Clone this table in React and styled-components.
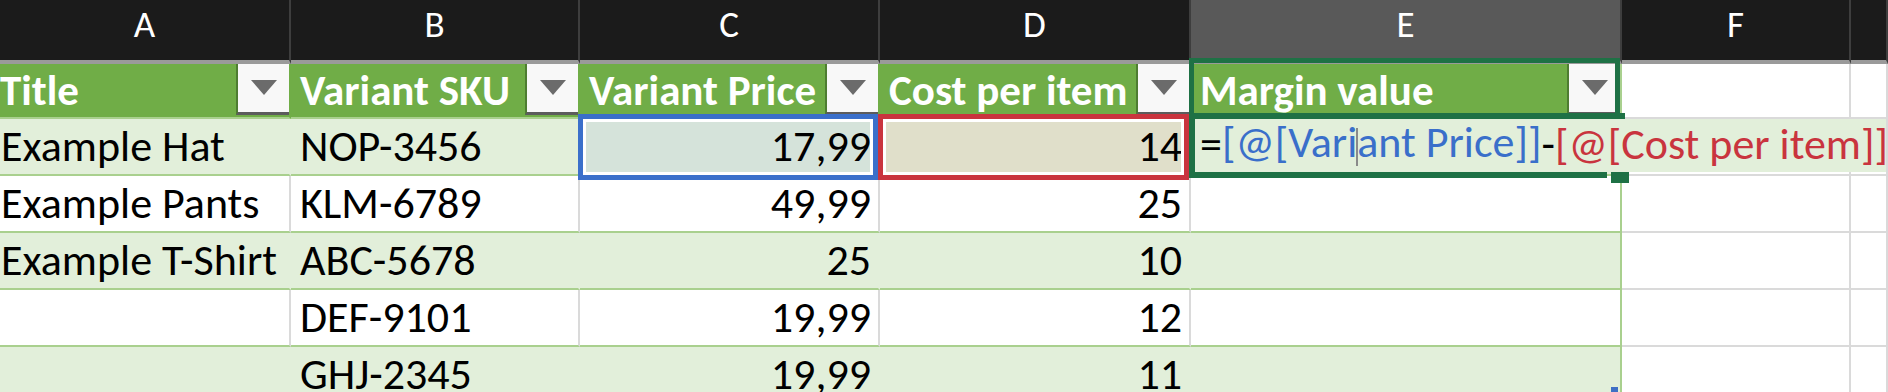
import React from 'react';
import styled, { createGlobalStyle } from 'styled-components';

const COLS = '291px 289px 300px 311px 431px 229px 1fr';

const GREEN = '#70ad47';
const BAND = '#e2efda';
const TABLE_LINE = '#a9d08e';
const GRID_LINE = '#dadada';
const ACTIVE = '#1e7145';

const GlobalStyle = createGlobalStyle`
  html, body {
    margin: 0;
    padding: 0;
    background: #fff;
  }
  body {
    font-family: Carlito, Calibri, Lato, 'Liberation Sans', sans-serif;
    overflow: hidden;
  }
`;

const Sheet = styled.div`
  width: 1888px;
  height: 392px;
  overflow: hidden;
  background: #fff;
`;

const Row = styled.div`
  display: grid;
  grid-template-columns: ${COLS};
  height: ${({ $h }) => $h}px;
`;

const ColHead = styled.div`
  display: flex;
  align-items: center;
  justify-content: center;
  padding-bottom: 10px;
  box-sizing: border-box;
  background: ${({ $active }) => ($active ? '#595959' : '#1b1b1b')};
  border-right: 2px solid #3e3e3e;
  border-bottom: 4px solid #9a9a9a;
  color: #fff;
  font-size: 37px;
  line-height: 44px;
`;

const HeadCell = styled.div`
  position: relative;
  display: flex;
  justify-content: space-between;
  box-sizing: border-box;
  padding-left: ${({ $first }) => ($first ? 0 : 9)}px;
  background: ${GREEN};
  border-bottom: 2px solid ${TABLE_LINE};
  border-right: 2px solid ${({ $edge }) => ($edge ? TABLE_LINE : GREEN)};
  color: #fff;
  font-weight: 700;
  font-size: 43px;
  line-height: 43px;
  white-space: nowrap;
`;

const HeadLabel = styled.span`
  align-self: flex-end;
  padding-bottom: 5px;
`;

const FilterButton = styled.div`
  width: 53px;
  height: 51px;
  box-sizing: border-box;
  display: flex;
  align-items: center;
  justify-content: center;
  background: #f8f8f8;
  border-left: 2px solid #4e7d31;
  border-bottom: 3px solid #5c5c5c;
`;

const Cell = styled.div`
  position: relative;
  display: flex;
  align-items: flex-end;
  justify-content: ${({ $num }) => ($num ? 'flex-end' : 'flex-start')};
  box-sizing: border-box;
  padding: 0 7px 6px ${({ $first }) => ($first ? 1 : 9)}px;
  font-size: 44px;
  line-height: 44px;
  color: #000;
  white-space: nowrap;
  background: ${({ $fill, $tone }) => $fill || ($tone === 'band' ? BAND : '#fff')};
  border-bottom: 2px solid ${({ $tone }) => ($tone === 'outside' ? GRID_LINE : TABLE_LINE)};
  border-right: 2px solid
    ${({ $tone, $edge }) =>
      $tone === 'outside' ? GRID_LINE : $edge ? TABLE_LINE : $tone === 'band' ? 'transparent' : GRID_LINE};
`;

const RefFrame = styled.div`
  position: absolute;
  top: -5px;
  bottom: -6px;
  left: -2px;
  right: 0;
  border: 5px solid ${({ $color }) => $color};
  box-shadow: inset 0 0 0 3px #fff;
  z-index: 2;
  pointer-events: none;
`;

const ColumnFrame = styled.div`
  position: absolute;
  top: -6px;
  left: -2px;
  right: 0;
  bottom: -2px;
  border: 5px solid ${ACTIVE};
  border-bottom: none;
  z-index: 3;
  pointer-events: none;
`;

const ActiveFrame = styled.div`
  position: absolute;
  top: -6px;
  left: -2px;
  bottom: -4px;
  right: 13px;
  border: 6px solid ${ACTIVE};
  border-right: none;
  z-index: 4;
  pointer-events: none;

  &::after {
    content: '';
    position: absolute;
    top: -6px;
    right: -18px;
    width: 18px;
    height: 6px;
    background: ${ACTIVE};
  }
`;

const FillHandle = styled.div`
  position: absolute;
  right: -9px;
  bottom: -9px;
  width: 18px;
  height: 11px;
  background: ${ACTIVE};
  z-index: 5;
`;

const Editor = styled.div`
  position: absolute;
  top: 0;
  bottom: 2px;
  left: 0;
  right: -266px;
  display: flex;
  align-items: flex-end;
  padding: 0 0 6px 9px;
  background: ${BAND};
  white-space: nowrap;
  z-index: 3;
`;

const Token = styled.span`
  color: ${({ $color }) => $color || '#000'};
`;

const Caret = styled.span`
  display: inline-block;
  width: 2px;
  height: 38px;
  margin: 0 -1px;
  background: #8a8a8a;
  vertical-align: -9px;
`;

const ResizeMark = styled.div`
  position: absolute;
  top: 40px;
  right: 2px;
  width: 7px;
  height: 7px;
  background: #3f6fc5;
  z-index: 2;
`;

const Triangle = () => (
  <svg width="26" height="16" viewBox="0 0 26 16">
    <polygon points="0,0 26,0 13,15" fill="#6b6b6b" />
  </svg>
);

const letters = ['A', 'B', 'C', 'D', 'E', 'F', ''];
const headers = ['Title', 'Variant SKU', 'Variant Price', 'Cost per item', 'Margin value'];
const rows = [
  ['Example Hat', 'NOP-3456', '17,99', '14'],
  ['Example Pants', 'KLM-6789', '49,99', '25'],
  ['Example T-Shirt', 'ABC-5678', '25', '10'],
  ['', 'DEF-9101', '19,99', '12'],
  ['', 'GHJ-2345', '19,99', '11'],
];

export default function App() {
  return (
    <Sheet>
      <GlobalStyle />
      <Row $h={64}>
        {letters.map((l, i) => (
          <ColHead key={i} $active={l === 'E'}>
            {l}
          </ColHead>
        ))}
      </Row>

      <Row $h={55}>
        {headers.map((h, i) => (
          <HeadCell key={h} $first={i === 0} $edge={i === 4}>
            <HeadLabel>{h}</HeadLabel>
            <FilterButton>
              <Triangle />
            </FilterButton>
            {i === 4 && <ColumnFrame />}
          </HeadCell>
        ))}
        <Cell $tone="outside" />
        <Cell $tone="outside" />
      </Row>

      {rows.map((r, ri) => {
        const tone = ri % 2 === 0 ? 'band' : 'plain';
        const first = ri === 0;
        return (
          <Row key={ri} $h={57}>
            <Cell $tone={tone} $first>
              {r[0]}
            </Cell>
            <Cell $tone={tone}>{r[1]}</Cell>
            <Cell $tone={tone} $num $fill={first ? '#d5e3da' : undefined}>
              {r[2]}
              {first && <RefFrame $color="#3a6fca" />}
            </Cell>
            <Cell $tone={tone} $num $fill={first ? '#e0dfca' : undefined}>
              {r[3]}
              {first && <RefFrame $color="#c9343e" />}
            </Cell>
            <Cell $tone={tone} $edge>
              {first && (
                <>
                  <Editor>
                    <Token>=</Token>
                    <Token $color="#3a6fca">
                      [@[Vari
                      <Caret />
                      ant Price]]
                    </Token>
                    <Token>-</Token>
                    <Token $color="#c9343e">[@[Cost per item]]</Token>
                  </Editor>
                  <ActiveFrame />
                  <FillHandle />
                </>
              )}
              {ri === rows.length - 1 && <ResizeMark />}
            </Cell>
            <Cell $tone="outside" />
            <Cell $tone="outside" />
          </Row>
        );
      })}
    </Sheet>
  );
}
